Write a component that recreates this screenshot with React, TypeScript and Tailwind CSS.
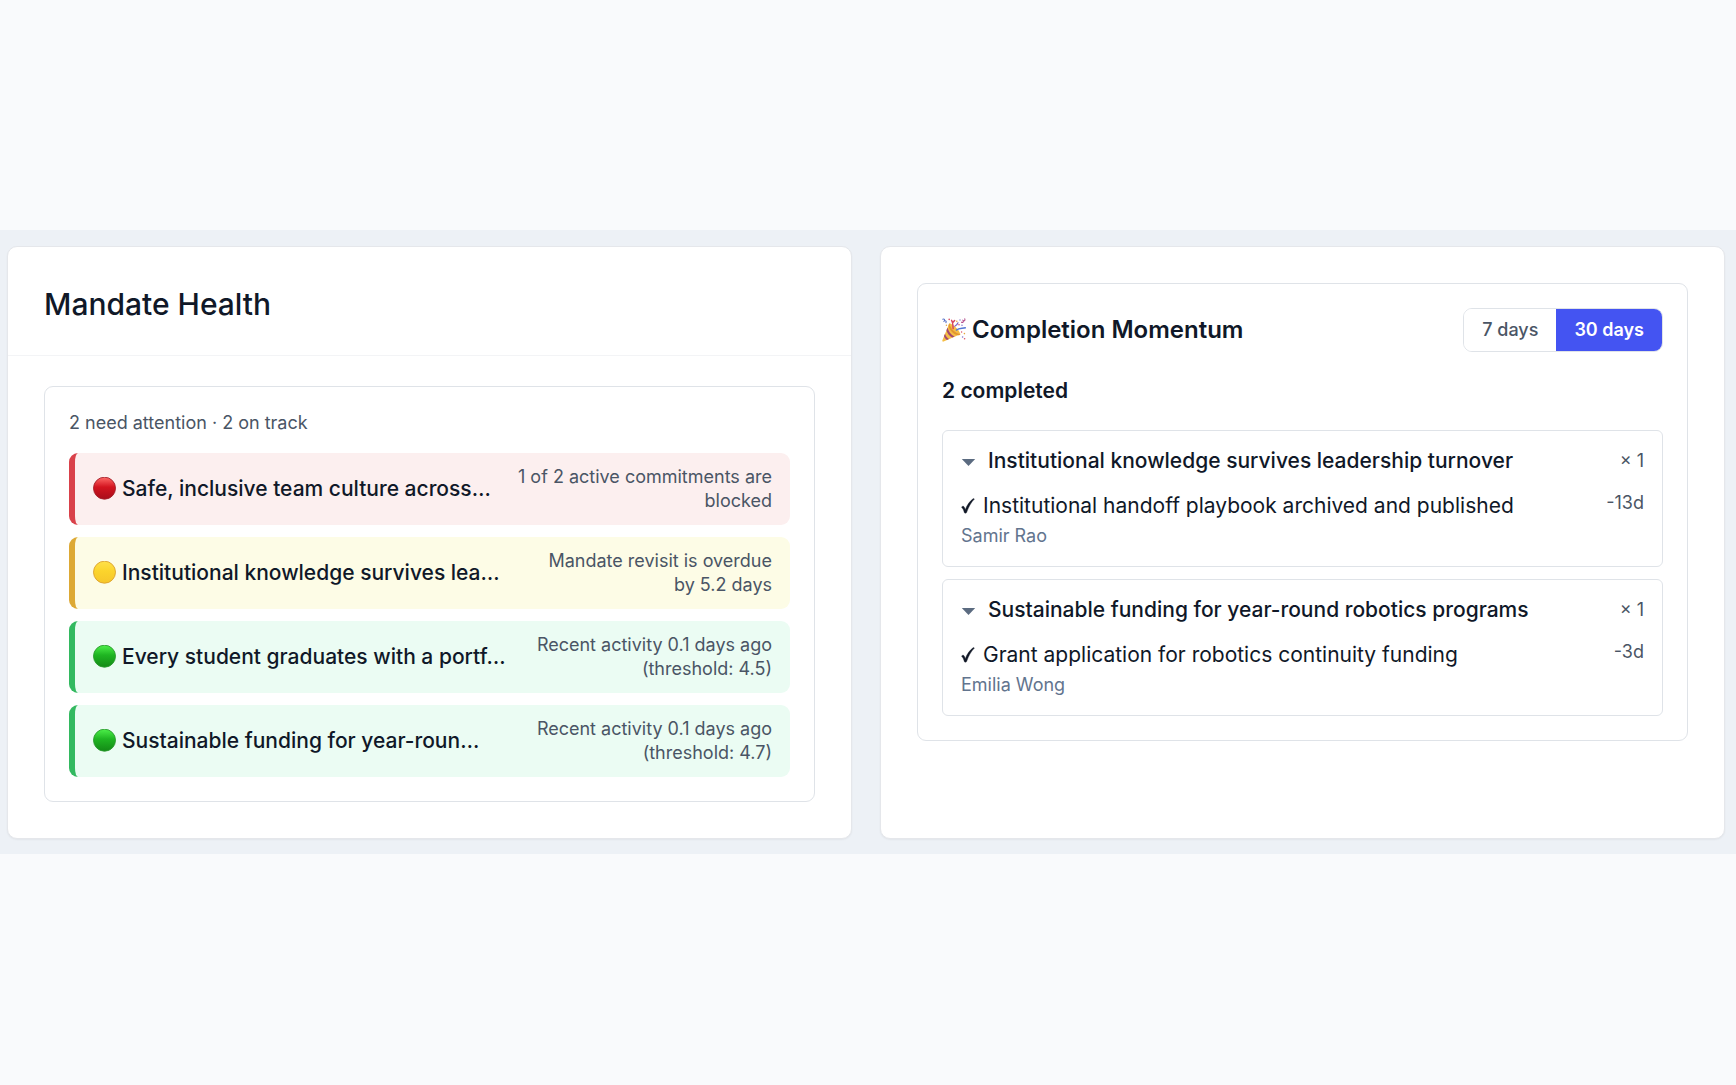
import React, { useState } from "react";
import clsx from "clsx";

type Status = "blocked" | "warning" | "healthy";

interface Mandate {
  title: string;
  reason: string;
  status: Status;
}

interface Completion {
  mandate: string;
  count: number;
  commitment: string;
  owner: string;
  age: string;
}

const mandates: Mandate[] = [
  {
    title: "Safe, inclusive team culture across…",
    reason: "1 of 2 active commitments are blocked",
    status: "blocked",
  },
  {
    title: "Institutional knowledge survives lea…",
    reason: "Mandate revisit is overdue by\u00a05.2\u00a0days",
    status: "warning",
  },
  {
    title: "Every student graduates with a portf…",
    reason: "Recent activity 0.1 days ago (threshold: 4.5)",
    status: "healthy",
  },
  {
    title: "Sustainable funding for year-roun…",
    reason: "Recent activity 0.1 days ago (threshold: 4.7)",
    status: "healthy",
  },
];

const completions: Completion[] = [
  {
    mandate: "Institutional knowledge survives leadership turnover",
    count: 1,
    commitment: "Institutional handoff playbook archived and published",
    owner: "Samir Rao",
    age: "-13d",
  },
  {
    mandate: "Sustainable funding for year-round robotics programs",
    count: 1,
    commitment: "Grant application for robotics continuity funding",
    owner: "Emilia Wong",
    age: "-3d",
  },
];

const rowStyles: Record<Status, string> = {
  blocked: "border-[#d9414a] bg-[#fcefef]",
  warning: "border-[#dda935] bg-[#fdfce6]",
  healthy: "border-[#33b960] bg-[#ebfcf3]",
};

const dotColors: Record<Status, { top: string; mid: string; bottom: string; rim: string }> = {
  blocked: { top: "#ff6a68", mid: "#d3141f", bottom: "#a80d1a", rim: "#a3202a" },
  warning: { top: "#ffe14a", mid: "#fbd42c", bottom: "#f6c62b", rim: "#dba02e" },
  healthy: { top: "#4df04a", mid: "#1fb522", bottom: "#138a16", rim: "#2a9a2e" },
};

const StatusDot = ({ status, id }: { status: Status; id: string }) => {
  const c = dotColors[status];
  return (
    <svg className="size-6 shrink-0" viewBox="0 0 24 24" aria-hidden="true">
      <defs>
        <linearGradient id={id} x1="0" y1="0" x2="0" y2="1">
          <stop offset="0" stopColor={c.top} />
          <stop offset="0.45" stopColor={c.mid} />
          <stop offset="1" stopColor={c.bottom} />
        </linearGradient>
      </defs>
      <circle cx="11.5" cy="11.2" r="11" fill={`url(#${id})`} stroke={c.rim} strokeWidth="0.9" />
    </svg>
  );
};

const PartyPopper = () => (
  <svg className="size-6 shrink-0" viewBox="0 0 24 24" aria-hidden="true">
    <path d="M7.4 5.2C10.8 6 17 11.4 18.4 16.2L1.6 23.6C.6 23.9.1 23.2.4 22.3z" fill="#f5bd45" />
    <path d="M7.4 5.2c.6 4.8 5.4 10 11 11-.4 1-2.2 1.3-4.5.5C10 15 6.4 10.5 6.5 7z" fill="#e2952f" />
    <path d="M5.6 9.4c.6 3.6 3.4 7.2 7 9.2l-2.2 1C7.4 18 5 15 4.4 12.2zM3 15.8c.6 2 2 4 4 5.2l-2 .9C3.6 21 2.5 19.6 2 18z" fill="#a3476f" />
    <path d="M11.2 10.6c-.6-3 .2-5.4-1.6-8.2M10.6 4.8l2-2.2" stroke="#d8475f" strokeWidth="1.5" fill="none" strokeLinecap="round" />
    <path d="M14.5 12c2.5-2.2 5.5-1.4 8.8-2.2" stroke="#5378d6" strokeWidth="1.6" fill="none" strokeLinecap="round" />
    <path d="M.8 1.2c1.6-.6 2.2.6 1.5 1.8 1.6-.8 2.4.3 1.6 1.6" stroke="#5b74c9" strokeWidth="1.1" fill="none" strokeLinecap="round" />
    <path d="M22.8.8c.5 1.8-.5 2.4-1.7 1.8.6 1.5-.4 2.3-1.6 1.6" stroke="#b5508c" strokeWidth="1.1" fill="none" strokeLinecap="round" />
    <path d="M12.8 8.2c1.6-.7 2.6-1.8 3.2-3.4" stroke="#7d5fc0" strokeWidth="1.2" fill="none" strokeLinecap="round" />
    <g fill="#dc5266">
      <circle cx="7.2" cy="1.4" r=".8" />
      <circle cx="17" cy="6.8" r=".8" />
      <circle cx="22.6" cy="20.8" r=".8" />
      <circle cx="19.6" cy="14" r=".7" />
    </g>
    <g fill="#e8a63c">
      <circle cx="14.8" cy="3.2" r=".8" />
      <circle cx="22.4" cy="15.6" r=".8" />
      <circle cx="4.4" cy="7.2" r=".7" />
    </g>
    <g fill="#7d6cc8">
      <circle cx="18" cy="2" r=".7" />
      <circle cx="20.6" cy="19" r=".8" />
      <circle cx="20" cy="7.2" r=".7" />
    </g>
  </svg>
);

const CheckMark = () => (
  <svg className="h-4 w-[14px] shrink-0" viewBox="0 0 14 16" aria-hidden="true">
    <path
      d="M.5 9.3C1 8.3 2.2 7.9 3 8.7c.7.8 1 1.9 1.3 3C6 7 8.7 3.3 12.3.6l1.1.4C10 4.5 7.3 9.3 5.6 14.6c-.5.7-1.8.8-2.2.1C2.7 12.5 2.1 10.3.5 9.3z"
      fill="#111827"
      stroke="#111827"
      strokeWidth="0.4"
      strokeLinejoin="round"
    />
  </svg>
);

const MandateRow = ({ mandate, id }: { mandate: Mandate; id: string }) => (
  <li
    className={clsx(
      "flex items-center justify-between gap-3 rounded-[9px] border-l-6 px-[18px] py-3",
      rowStyles[mandate.status]
    )}
  >
    <div className="flex shrink-0 items-center gap-[5px]">
      <StatusDot status={mandate.status} id={id} />
      <span className="text-[21px] leading-[30px] font-medium whitespace-nowrap text-gray-900">
        {mandate.title}
      </span>
    </div>
    <span className="max-w-[260px] text-right text-lg leading-6 text-gray-600">
      {mandate.reason}
    </span>
  </li>
);

const CompletionGroup = ({ item }: { item: Completion }) => {
  const [open, setOpen] = useState(true);

  return (
    <li className="rounded-md border border-[#dfe3e8] px-[18px] pt-[15px] pb-[18px]">
      <button
        type="button"
        aria-expanded={open}
        onClick={() => setOpen(!open)}
        className="flex w-full items-center justify-between text-left"
      >
        <span className="flex items-center gap-3">
          <svg
            className={clsx("h-[10px] w-[15px] shrink-0", !open && "-rotate-90")}
            viewBox="0 0 15 10"
            aria-hidden="true"
          >
            <path d="M.8 3h13.4L7.5 10z" fill="#5b6b80" />
          </svg>
          <span className="text-[21px] leading-[30px] font-medium text-gray-900">
            {item.mandate}
          </span>
        </span>
        <span className="text-lg leading-6 text-gray-600">× {item.count}</span>
      </button>
      {open && (
        <div className="mt-[15px] flex items-start justify-between">
          <div>
            <p className="flex items-center gap-2 text-[21px] leading-[30px] text-gray-900">
              <CheckMark />
              {item.commitment}
            </p>
            <p className="mt-[3px] text-lg leading-6 text-slate-500">{item.owner}</p>
          </div>
          <span className="text-lg leading-6 text-gray-600">{item.age}</span>
        </div>
      )}
    </li>
  );
};

const App = () => {
  const [range, setRange] = useState<7 | 30>(30);

  return (
    <div className="flex min-h-screen items-center bg-[#f9fafc] pb-0.5 font-[Inter,sans-serif]">
      <main className="grid w-full grid-cols-2 gap-7 bg-[#edf1f6] pt-4 pr-[11px] pb-[15px] pl-[7px]">
        {/* Mandate health */}
        <section className="rounded-[10px] border border-gray-200 bg-white shadow-xs">
          <header className="border-b border-gray-100 px-9 pt-9 pb-[30px]">
            <h2 className="text-3xl leading-[42px] font-medium text-gray-900">Mandate Health</h2>
          </header>
          <div className="px-9 pt-[30px] pb-9">
            <div className="rounded-[9px] border border-[#dfe3e8] p-6">
              <p className="text-lg leading-6 text-gray-600">2 need attention · 2 on track</p>
              <ul className="mt-[18px] flex flex-col gap-3">
                {mandates.map((mandate, i) => (
                  <MandateRow key={mandate.title} mandate={mandate} id={`dot-${i}`} />
                ))}
              </ul>
            </div>
          </div>
        </section>

        {/* Completion momentum */}
        <section className="rounded-[10px] border border-gray-200 bg-white p-9 shadow-xs">
          <div className="rounded-[9px] border border-[#dfe3e8] p-6">
            <header className="flex items-center justify-between">
              <h2 className="flex items-center gap-[6px] text-2xl font-semibold text-gray-900">
                <PartyPopper />
                Completion Momentum
              </h2>
              <div className="flex overflow-hidden rounded-[9px] border border-[#dfe3e8]">
                {([7, 30] as const).map((days) => (
                  <button
                    key={days}
                    type="button"
                    aria-pressed={range === days}
                    onClick={() => setRange(days)}
                    className={clsx(
                      "px-[18px] py-[9px] text-lg leading-6",
                      range === days
                        ? "bg-[#4454f2] font-semibold text-white"
                        : "bg-white font-medium text-gray-600"
                    )}
                  >
                    {days} days
                  </button>
                ))}
              </div>
            </header>
            <p className="mt-6 text-[21px] leading-[30px] font-semibold text-gray-900">
              2 completed
            </p>
            <ul className="mt-6 flex flex-col gap-3">
              {completions.map((item) => (
                <CompletionGroup key={item.mandate} item={item} />
              ))}
            </ul>
          </div>
        </section>
      </main>
    </div>
  );
};

export default App;
